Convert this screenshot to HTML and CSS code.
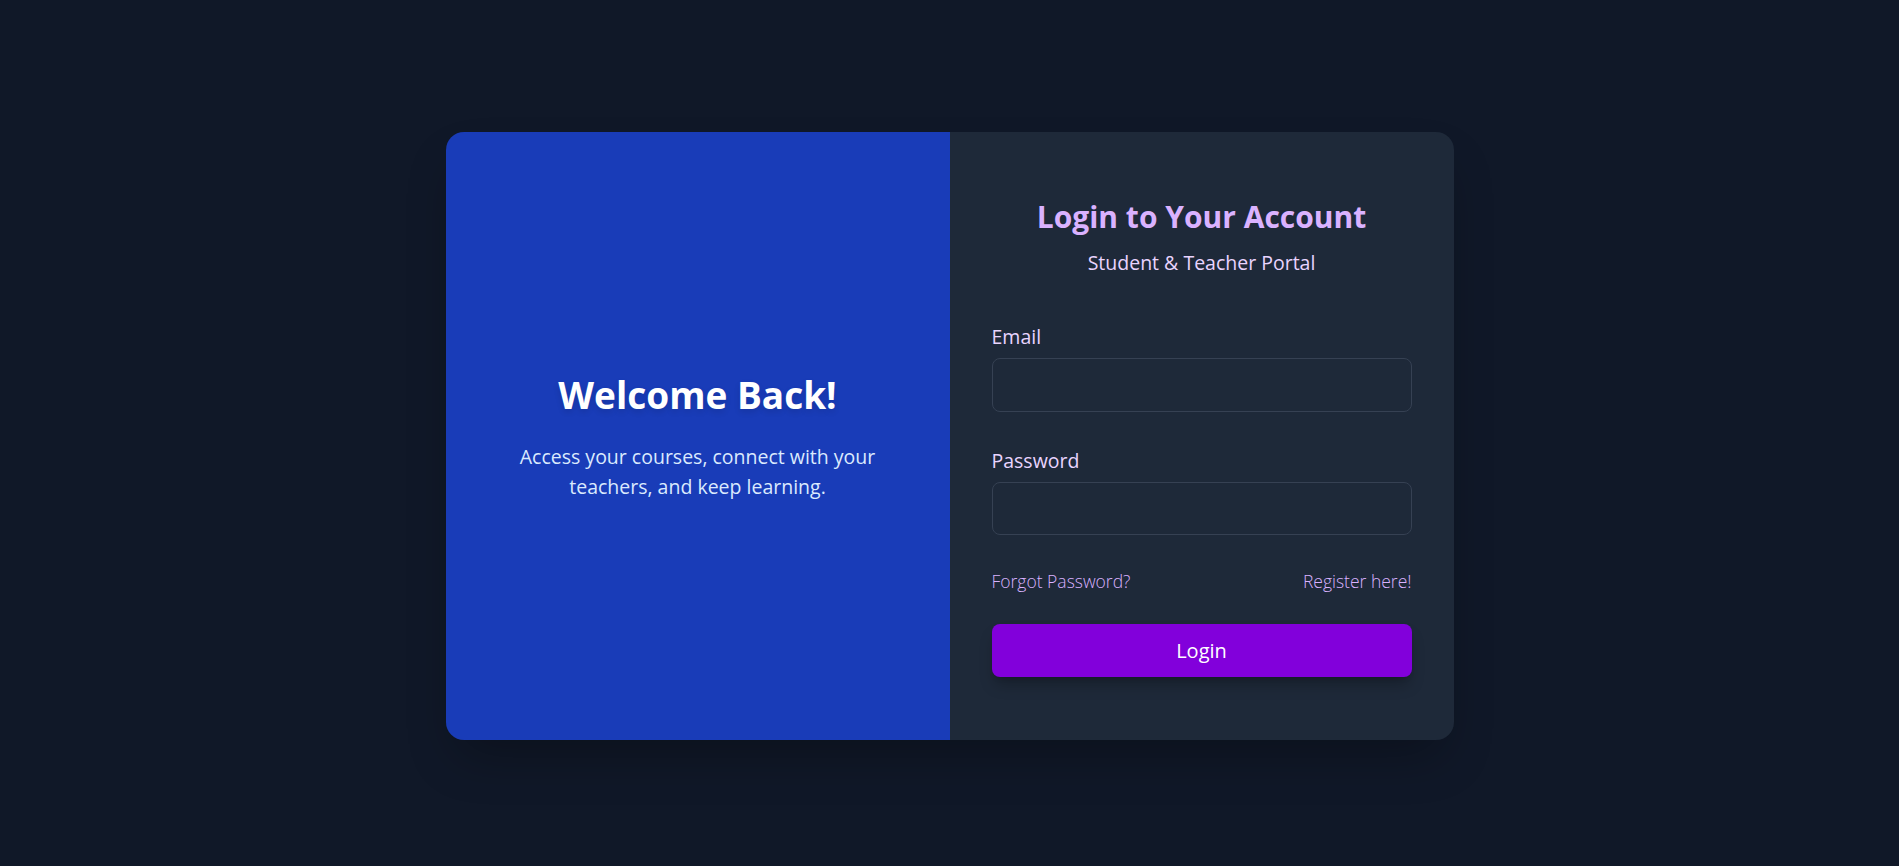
FILE: index.html
```html
<!DOCTYPE html>
<html lang="en">
<head>
<meta charset="utf-8">
<title>Login</title>
<link rel="stylesheet" href="styles.css">
</head>
<body>
  <main class="page">
    <div class="card">
      <section class="hero">
        <h1 class="hero-title">Welcome Back!</h1>
        <p class="hero-text">Access your courses, connect with your teachers, and keep learning.</p>
      </section>
      <section class="panel">
        <h2 class="panel-title">Login to Your Account</h2>
        <p class="panel-subtitle">Student &amp; Teacher Portal</p>
        <form class="form">
          <div class="field">
            <label class="label" for="email">Email</label>
            <input class="input" id="email" type="email">
          </div>
          <div class="field">
            <label class="label" for="password">Password</label>
            <input class="input" id="password" type="password">
          </div>
          <div class="links">
            <a class="link" href="#">Forgot Password?</a>
            <a class="link" href="#">Register here!</a>
          </div>
          <button class="button" type="button">Login</button>
        </form>
      </section>
    </div>
  </main>
</body>
</html>
```
FILE: styles.css
```css
* { box-sizing: border-box; }

html, body {
  margin: 0;
  padding: 0;
  background: #101828;
}

body {
  font-family: "Open Sans", "Noto Sans", sans-serif;
}

.page {
  min-height: 866px;
  display: flex;
  align-items: center;
  justify-content: center;
  padding-top: 6px;
}

.card {
  width: 1008px;
  display: grid;
  grid-template-columns: 1fr 1fr;
  border-radius: 18px;
  overflow: hidden;
  box-shadow: 0 25px 50px -12px rgba(0, 0, 0, 0.3);
}

.hero {
  background: #193cb8;
  display: flex;
  flex-direction: column;
  align-items: center;
  justify-content: center;
  text-align: center;
  padding: 0 42px;
}

.hero-title {
  margin: 0;
  font-size: 37px;
  line-height: 48px;
  font-weight: 700;
  color: #ffffff;
  text-shadow: 0 3px 6px rgba(0, 0, 0, 0.12);
}

.hero-text {
  margin: 23px 0 0;
  max-width: 410px;
  font-size: 19.5px;
  line-height: 30px;
  color: #dbeafe;
}

.panel {
  background: #1e2939;
  padding: 65px 42px 63px;
  display: flex;
  flex-direction: column;
}

.panel-title {
  margin: 0;
  text-align: center;
  font-size: 30px;
  line-height: 40px;
  font-weight: 700;
  color: #dab2ff;
}

.panel-subtitle {
  margin: 12px 0 0;
  text-align: center;
  font-size: 19.5px;
  line-height: 28px;
  color: #e9d4ff;
}

.form {
  margin-top: 46px;
  display: flex;
  flex-direction: column;
}

.field {
  display: flex;
  flex-direction: column;
}

.field + .field {
  margin-top: 35px;
}

.label {
  font-size: 19.5px;
  line-height: 28px;
  color: #e9d4ff;
  margin-bottom: 7px;
}

.input {
  height: 53.5px;
  width: 100%;
  background: #1e2939;
  border: 1px solid #364153;
  border-radius: 8px;
  color: #ffffff;
  font-family: inherit;
  font-size: 18px;
  padding: 0 14px;
  outline: none;
}

.links {
  margin-top: 34px;
  display: flex;
  justify-content: space-between;
}

.link {
  font-size: 17.5px;
  line-height: 24px;
  font-weight: 300;
  color: #dab2ff;
  text-decoration: none;
}

.button {
  margin-top: 31px;
  height: 53px;
  width: 100%;
  border: none;
  border-radius: 8px;
  background: #8200db;
  color: #ffffff;
  font-family: inherit;
  font-size: 20px;
  line-height: 28px;
  font-weight: 500;
  box-shadow: 0 10px 15px -3px rgba(0, 0, 0, 0.25), 0 4px 6px -4px rgba(0, 0, 0, 0.2);
  cursor: pointer;
}
```
